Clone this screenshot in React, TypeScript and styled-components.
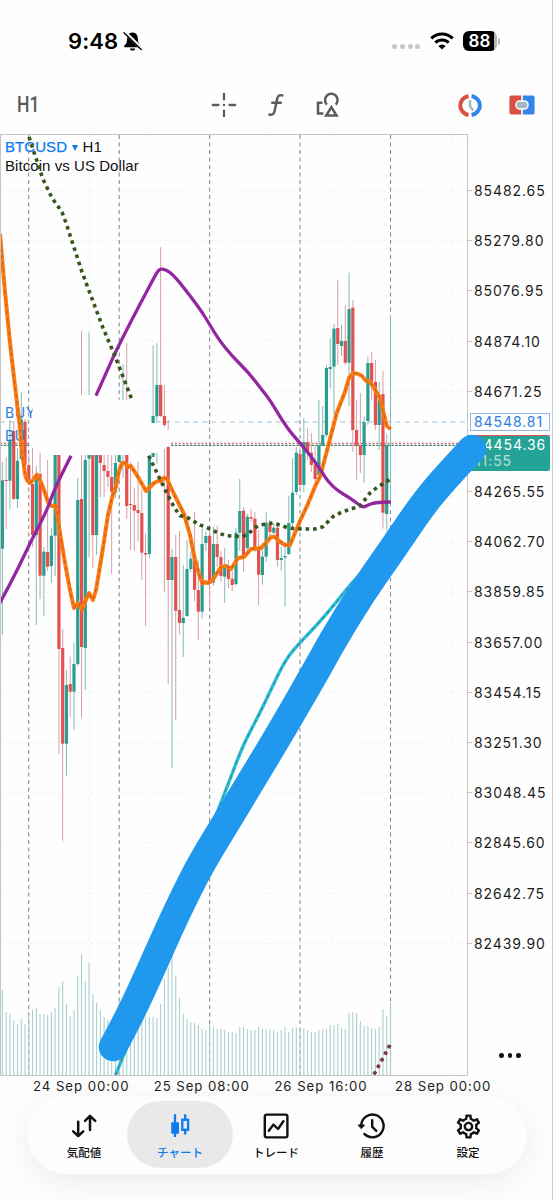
import React from 'react';
import styled, { createGlobalStyle } from 'styled-components';
import { MdOutlineSettings } from 'react-icons/md';

const GlobalStyle = createGlobalStyle`
  * { box-sizing: border-box; }
  body { margin: 0; background: #fefefe; }
`;

const Screen = styled.div`
  width: 553px;
  height: 1200px;
  overflow: hidden;
  display: flex;
  flex-direction: column;
  background: #fefefe;
  border-right: 1px solid #c9c9c9;
  font-family: Inter, 'Noto Sans CJK JP', sans-serif;
  color: #000;
`;

const StatusBar = styled.header`
  height: 82px;
  flex: none;
  display: flex;
  align-items: center;
  justify-content: space-between;
  padding: 0 52px 0 68px;
`;

const StatusGroup = styled.div<{ $gap: number }>`
  display: flex;
  align-items: center;
  gap: ${(p) => p.$gap}px;
`;

const Clock = styled.span`
  font-size: 22px;
  line-height: 26px;
  font-weight: 600;
  letter-spacing: 0.1px;
`;

const SignalDots = styled.div`
  display: flex;
  gap: 2.7px;
  margin-top: 11px;
`;

const SignalDot = styled.i`
  width: 5px;
  height: 5px;
  border-radius: 50%;
  background: #c7c7c9;
`;

const Battery = styled.div`
  width: 34px;
  height: 20px;
  border-radius: 6px;
  background: linear-gradient(90deg, #000 31px, #b5b5b5 31px);
  color: #fff;
  font-size: 17px;
  line-height: 20px;
  font-weight: 600;
  padding-left: 5.5px;
  letter-spacing: 0.2px;
`;

const BatteryTip = styled.i`
  width: 2px;
  height: 7px;
  border-radius: 0 3px 3px 0;
  background: #b5b5b5;
`;

const Toolbar = styled.div`
  height: 52px;
  flex: none;
  display: grid;
  grid-template-columns: 210px 1fr auto;
  align-items: center;
  padding: 0 17.5px 6px 17px;
`;

const Timeframe = styled.span`
  font-family: Roboto, sans-serif;
  font-weight: 500;
  font-size: 22px;
  line-height: 24px;
  color: #5a5a5a;
  transform: scaleX(0.8);
  transform-origin: left center;
`;

const ToolGroup = styled.div<{ $gap: number; $shift?: number }>`
  display: flex;
  align-items: center;
  gap: ${(p) => p.$gap}px;
  margin-left: ${(p) => p.$shift ?? 0}px;
`;

const ChartArea = styled.main`
  position: relative;
  height: 942px;
  flex: none;
  display: flex;
`;

const Plot = styled.section`
  position: relative;
  width: 468px;
  height: 942px;
`;

const PlotSvg = styled.svg`
  position: relative;
  display: block;
`;

const Legend = styled.div`
  position: absolute;
  left: 5px;
  top: 4px;
  font-family: 'Liberation Sans', sans-serif;
  font-size: 15px;
  line-height: 18.6px;
  letter-spacing: 0.06px;
  color: #111;
`;

const SymbolName = styled.span`
  color: #0a7cf0;
  -webkit-text-stroke: 0.25px #0a7cf0;
`;

const Caret = styled.span`
  display: inline-block;
  margin: 0 5px 1.5px 4.5px;
  border: 3.5px solid transparent;
  border-top: 6px solid #0a7cf0;
  border-bottom: 0;
`;

const PriceAxis = styled.aside`
  position: relative;
  flex: 1;
  padding-top: 31.4px;
`;

const PriceRow = styled.div`
  height: 50.2px;
  display: flex;
  align-items: center;
  font-size: 14px;
  letter-spacing: 0.92px;
  color: #1c1c1c;

  &::before {
    content: '';
    width: 4px;
    height: 1px;
    margin-right: 2px;
    background: #c4c4c4;
  }
`;

const EmptyRow = styled.div`
  height: 50.2px;
`;

const AskTag = styled.div`
  position: absolute;
  left: 1.5px;
  top: 279px;
  width: 80px;
  height: 18px;
  border: 1px solid #93b7ea;
  background: #fefefe;
  color: #2a7de1;
  font-size: 14px;
  line-height: 16px;
  letter-spacing: 0.92px;
  padding-left: 3.5px;
`;

const BidTag = styled.div`
  position: absolute;
  left: 0;
  top: 301px;
  width: 82px;
  height: 36px;
  border-top: 1.5px solid #e2504f;
  border-radius: 0 2px 2px 0;
  background: #26a397;
  color: #fff;
  font-size: 14px;
  line-height: 17px;
  letter-spacing: 0.92px;
  padding: 0 0 0 6px;
`;

const Countdown = styled.div`
  color: #b5e0db;
  padding-left: 1px;
  line-height: 16px;
`;

const MoreDots = styled.div`
  position: absolute;
  left: 31px;
  top: 919px;
  display: flex;
  gap: 4px;
`;

const MoreDot = styled.i`
  width: 4.6px;
  height: 4.6px;
  border-radius: 50%;
  background: #111;
`;

const BrushLayer = styled.svg`
  position: absolute;
  left: 0;
  top: 0;
  pointer-events: none;
`;

const TimeAxis = styled.div`
  height: 20px;
  flex: none;
  display: flex;
  padding-left: 33px;
`;

const TimeLabel = styled.span`
  width: 120.7px;
  flex: none;
  font-size: 13.2px;
  line-height: 21px;
  letter-spacing: 0.95px;
  color: #222;
  white-space: nowrap;
`;

const TabBar = styled.nav`
  width: 500px;
  height: 78px;
  flex: none;
  margin-left: 27px;
  border-radius: 39px;
  background: #fdfdfd;
  box-shadow: 0 8px 34px rgba(0, 0, 0, 0.08);
  display: flex;
  align-items: center;
  padding-left: 4px;
`;

const Tab = styled.div<{ $active?: boolean }>`
  width: 106px;
  height: 67px;
  margin: -1px -5px 0;
  flex: none;
  border-radius: 33.5px;
  background: ${(p) => (p.$active ? '#e9e9ea' : 'transparent')};
  color: ${(p) => (p.$active ? '#0a7cf0' : '#111')};
  display: flex;
  flex-direction: column;
  align-items: center;
  padding-top: 11px;

  &:first-child { margin-left: 0; }
`;

const TabLabel = styled.span`
  font-family: 'Noto Sans CJK JP', sans-serif;
  font-weight: 500;
  font-size: 11.5px;
  line-height: 16px;
  margin-top: 4px;
`;

const SettingsIcon = styled(MdOutlineSettings)`
  width: 29px;
  height: 29px;
  margin-bottom: -1px;
`;

const STEP = 3.768;
const xAt = (i: number) => 2.4 + STEP * i;
const BASE = 1075;

const UP = '#2a9d8f';
const DOWN = '#e2504f';

/* [bar index, rising, high, low, body top, body bottom] */
type Candle = [number, 0 | 1, number, number, number, number];
const candles: Candle[] = [
  [0, 1, 462, 635, 480.3, 548.7], [1, 0, 457, 529, 480, 481], [2, 1, 420, 509, 441, 480.7],
  [3, 0, 422, 500, 431, 499], [4, 1, 448, 508, 460.7, 499], [5, 1, 392, 460, 419.3, 459],
  [6, 0, 419, 475, 421.7, 465], [7, 0, 455, 481, 465, 480], [8, 0, 448, 547, 484, 535],
  [9, 1, 466, 625, 475, 535], [10, 0, 453, 599, 474, 575.7], [11, 1, 547, 616, 551.7, 575.7],
  [12, 0, 460, 571, 552, 566.7], [13, 1, 528, 583, 535.7, 566], [14, 1, 455, 576, 455, 535.7],
  [15, 0, 455, 754, 455, 649], [16, 0, 629, 841, 648, 743.7], [17, 1, 670, 775.7, 685, 743.7],
  [18, 0, 656.7, 717, 684, 691.7], [19, 1, 642.7, 729.7, 664, 691.7], [20, 1, 478, 666, 500, 664],
  [21, 0, 455, 718, 499, 647], [22, 1, 455, 690, 460, 648], [23, 1, 455, 557, 455, 458.7],
  [24, 0, 455, 568, 455, 535], [25, 1, 455, 555, 455, 535], [26, 0, 455, 497, 455, 463],
  [27, 0, 455, 497, 465, 471], [28, 0, 455, 487, 471, 477], [29, 0, 455, 574, 477, 491.7],
  [30, 1, 455, 498, 463, 492.7], [31, 1, 455, 463, 455, 462], [32, 1, 455, 478, 462, 463],
  [33, 0, 455, 519, 455, 506], [34, 0, 462, 550, 504, 505], [35, 0, 488, 551, 505, 510.7],
  [36, 0, 462, 541, 510, 513], [37, 0, 490, 580, 513, 552.7], [38, 0, 533, 626, 553, 554.5],
  [39, 1, 455, 558, 458, 554], [40, 1, 345, 423, 416, 423], [40, 1, 453, 457, 453, 457],
  [41, 1, 343, 422, 385, 416.3], [42, 0, 247, 417, 385, 416], [43, 0, 385, 427, 416, 425],
  [44, 0, 446, 684, 447, 580], [45, 1, 548.7, 767.7, 557, 580], [46, 0, 535, 720, 557, 610.7],
  [47, 0, 531, 634, 610, 623], [48, 1, 564.7, 657, 617.7, 623], [49, 1, 540, 617, 569, 616],
  [50, 1, 551.7, 572, 558.7, 569], [51, 0, 511.7, 601, 556, 589.7], [52, 0, 560, 640, 590, 611.7],
  [53, 1, 528, 619, 544, 611.7], [54, 1, 531.7, 551, 536, 543], [55, 0, 530, 608, 535.7, 584],
  [56, 1, 527, 586, 544, 582.7], [57, 0, 525.7, 567, 544, 557], [58, 0, 551, 582, 557, 576],
  [59, 1, 547.7, 603, 566.7, 576.7], [60, 0, 560, 588, 567, 579], [61, 0, 570.7, 591, 578.7, 585],
  [62, 1, 528, 586, 532.7, 584], [63, 1, 479, 551, 511, 532.7], [64, 0, 507, 572, 510.7, 556.7],
  [65, 1, 513.7, 552, 516.7, 548], [66, 0, 509, 521.7, 517, 518.7], [67, 0, 511.7, 552, 518.7, 549],
  [68, 0, 530, 605, 549, 574.7], [69, 1, 543, 584.7, 556.7, 575], [70, 1, 512, 561.7, 522.7, 556.7],
  [71, 0, 520, 540, 524, 532], [72, 1, 523, 535, 527.7, 532.7], [73, 0, 522, 566.7, 527.7, 560],
  [74, 1, 546.7, 571, 558, 560], [75, 1, 543, 606.7, 556, 557.5], [76, 1, 495.7, 555, 523, 554],
  [77, 1, 458, 527, 492.7, 523], [78, 1, 447, 495, 452.7, 492], [79, 0, 447, 490, 454, 485],
  [80, 1, 418, 492, 442, 485], [81, 0, 427.7, 460, 442, 452.7], [82, 0, 433, 472, 452.7, 465],
  [83, 0, 445, 482, 464.7, 479], [84, 1, 400, 478, 445.7, 475], [85, 1, 406, 446, 435, 445.7],
  [86, 1, 365, 437, 368, 435], [87, 1, 338, 388.7, 367, 369], [88, 1, 324, 415, 328.7, 366.7],
  [89, 0, 280, 365, 328, 344], [90, 1, 325, 356, 341, 346], [91, 0, 305, 365, 341, 362.7],
  [92, 1, 272.7, 406, 309, 362.7], [93, 0, 300, 452, 307.7, 430], [94, 0, 400, 480, 430, 445.7],
  [95, 0, 393, 473, 445.7, 455], [96, 1, 417, 483, 422, 455], [97, 1, 356.7, 425, 363, 421],
  [98, 0, 352, 400, 363, 381.7], [99, 0, 360, 430, 381.7, 425], [100, 1, 382, 450, 395, 425],
  [101, 0, 371, 528.7, 394, 512.7], [102, 1, 434, 530.7, 445, 514],
];

/* wicks whose bodies are hidden: [bar index, rising, top, bottom] */
const looseWicks: [number, 0 | 1, number, number][] = [
  [21, 0, 331, 395], [23, 1, 332.7, 395], [32, 1, 364, 400], [33, 0, 343, 400],
  [41, 1, 453, 464], [43, 0, 449, 591.7], [44, 0, 420, 430], [103, 1, 315, 507],
];

const volumeTops = [
  990, 1012, 1014, 1020, 1024, 1019, 1024, 1015, 1010, 1008, 1014, 1014, 1015, 1012, 1008, 987, 981, 1004,
  1016, 1010, 976, 954, 981, 963, 994, 1003, 1010, 1017, 1020, 1020, 1020, 1001, 1020, 1020, 1020, 1020,
  1020, 1018, 1017, 1017, 1017, 1018, 1004, 979, 968, 952, 976, 998, 1014, 1019, 1022, 1023, 1025, 1029,
  1030, 1024, 1027, 1029, 1029, 1030, 1032, 1032, 1033, 1027, 1027, 1029, 1030, 1030, 1027, 1029, 1029, 1030,
  1030, 1032, 1030, 1027, 1032, 1028, 1027, 1030, 1028, 1030, 1032, 1032, 1030, 1030, 1029, 1025, 1025, 1024,
  1028, 1029, 1013, 1012, 1013, 1021, 1026, 1026, 1028, 1029, 1027, 1009, 1016, 1003,
];

/* Rounds the corners of a polyline by running quadratic curves through segment midpoints. */
const smooth = (points: string) => {
  const p = points.split(' ').map((s) => s.split(',').map(Number));
  let d = `M${p[0][0]} ${p[0][1]}`;
  for (let i = 1; i < p.length - 1; i++) {
    d += ` Q${p[i][0]} ${p[i][1]} ${(p[i][0] + p[i + 1][0]) / 2} ${(p[i][1] + p[i + 1][1]) / 2}`;
  }
  const last = p[p.length - 1];
  return `${d} L${last[0]} ${last[1]}`;
};

const fastAverage =
  '0,234 5,292 10,343 15,386 20,428 22,452 25,474 27,480 29.5,483 33,480 37,474.5 40,480 44,490 48,502 52,506 56,506 60,533 65,563 70,590 74,608 78,603 82,610 85,602 89,593 93,600 96,590 102,554 108,515 113,494 116,487 119,471 122,463 125,463 128,467 131,466 138,477 146,491 154,483 158,481 161,481 164,477.5 167,479 174,494 184,514 190,535 195,560 199,574 202.5,583.5 205,582 208,583 212,581 221,567 226,566 231,569 238,558 244,557 251,549 261,548 266,543 271,537 275,537 279,541 285,545 290,545 295,533 300,521 306.7,506.7 315,486.7 320,476.7 328,446.7 336.7,413 345,391.7 349,378 352.7,373.5 357,373.5 361.7,375.7 366,380.7 370,381.7 374,388 380,398 386.7,426 390.7,429';
const midAverageA = '0,602.7 15,575 30,543 46.7,511 53,493 60,478 71,455.7';
const midAverageB =
  '96,395.7 106.7,371.7 115,353 131.7,320 146.7,291.7 157.3,271.5 160,269.3 163,269 168,271 173,275 180,282.7 200,309 210,325 219,340 232,356 249,373 262,390 270,400 286.7,427.7 300,443 310,455 320,469 328,481.7 338,491 350,498 358,504 363,507.5 368,505 375,502.5 390.7,502';
const slowAverageA = '29,137 42.5,178 52,198 62,212 65.7,222 82,272 103,328 115,356 132,400';
const slowAverageB =
  '148.7,455.7 166.7,493 173,505 176.7,511 180,515.7 186,516.7 200,525 205,526.7 220,533.7 226.7,535.7 241.7,536.7 248,534 255,527.7 260,525 273,523 280,525 288,528 301.7,529 315,529 323,526.7 333,516.7 341.7,512 348,510 360,506 370,493 378,486.7 390.7,479';
const trendLine = '115.5,1075 126,1050 223,797 226.7,788 243,745 258,716.7 270,691.7 285.7,659 300,642.7 320,621.7 336.7,601.7 351.7,583 366,568';
const brushPoints =
  '113,1047 127,1021 145,983 168.5,930 186,893 202,862 227.5,820 250,783 283.7,727 317,669 333,640 361,594 392,550 419,510 438,486 472,449';

const prices = [
  '85482.65', '85279.80', '85076.95', '84874.10', '84671.25', '', '84265.55', '84062.70', '83859.85',
  '83657.00', '83454.15', '83251.30', '83048.45', '82845.60', '82642.75', '82439.90',
];
const times = ['24 Sep 00:00', '25 Sep 08:00', '26 Sep 16:00', '28 Sep 00:00'];

const rowsY = Array.from({ length: 17 }, (_, i) => 140.3 + 50.2 * i);
const colsX = [88.9, 149.3, 269.9, 330.2, 450.8];
const daysX = [28.7, 119.2, 209.6, 300, 390.5];

function PriceChart() {
  return (
    <PlotSvg width="468" height="942" viewBox="0 134 468 942">
      <defs>
        <clipPath id="orderA"><rect x="0" y="400" width="32.5" height="24" /></clipPath>
        <clipPath id="orderB"><rect x="0" y="424" width="25" height="24" /></clipPath>
      </defs>
      <g stroke="#f0f3f5" strokeWidth="1" strokeDasharray="4 3.5">
        {rowsY.map((y) => <line key={y} x1="0" x2="467" y1={y} y2={y} />)}
        {colsX.map((x) => <line key={x} x1={x} x2={x} y1="135" y2={BASE} />)}
      </g>
      <g stroke="#8b8b8b" strokeWidth="1.1" strokeDasharray="4 3.5">
        {daysX.map((x) => <line key={x} x1={x} x2={x} y1="135" y2={BASE} />)}
      </g>
      <line x1="0" x2="467" y1="422" y2="422" stroke="#9dbfdc" strokeDasharray="4.8 4.4" strokeWidth="1.2" />
      <line x1="0" x2="467" y1="443.3" y2="443.3" stroke="#d9646a" strokeDasharray="2 1.8" strokeWidth="1.3" />
      <line x1="0" x2="467" y1="445.3" y2="445.3" stroke="#3f7f78" strokeDasharray="2.6 1.2" strokeWidth="1.3" />
      <path d="M29.5 404 L60 398 L97 397 L135 401.5 L150 404 L152 424 L166 426 L169.8 430 L169.8 447 L165 454.6 L33 454.6 L29.5 447Z" fill="#fefefe" />
      <g stroke="#a9cfce" strokeWidth="1.1">
        {volumeTops.map((top, i) => <line key={i} x1={xAt(i)} x2={xAt(i)} y1={top} y2={BASE} />)}
      </g>
      {looseWicks.map(([i, up, a, b], k) => (
        <line key={k} x1={xAt(i)} x2={xAt(i)} y1={a} y2={b} stroke={up ? '#86b9b8' : '#d2a3ab'} />
      ))}
      {candles.map(([i, up, hi, lo, top, bottom], k) => (
        <g key={k}>
          <line x1={xAt(i)} x2={xAt(i)} y1={hi} y2={lo} stroke={up ? '#86b9b8' : '#d6a0a6'} />
          <rect x={xAt(i) - 1.6} y={top} width="3.2" height={bottom - top} fill={up ? UP : DOWN} />
        </g>
      ))}
      <g fill="#2a7de1" fontFamily="Inter, sans-serif" fontSize="14" letterSpacing="0.6">
        <text x="5" y="418" clipPath="url(#orderA)">BUY</text>
        <text x="5" y="441" clipPath="url(#orderB)">BUY</text>
      </g>
      <g fill="none" strokeLinejoin="round">
        <path d={smooth(trendLine)} stroke="#27c0da" strokeWidth="3.4" />
        <path d={smooth(trendLine)} stroke="#567e88" strokeWidth="1.1" strokeDasharray="4 3.4" />
        <polyline points={fastAverage} stroke="#fb7a12" strokeWidth="4" />
        <polyline points={fastAverage} stroke="#c9600f" strokeWidth="1.1" strokeDasharray="3.5 3.5" />
        <path d={smooth(midAverageA)} stroke="#9327a0" strokeWidth="3.3" />
        <path d={smooth(midAverageB)} stroke="#9327a0" strokeWidth="3.3" />
        <polyline points={slowAverageA} stroke="#35561c" strokeWidth="3.6" strokeDasharray="3.6 3.9" />
        <polyline points={slowAverageB} stroke="#35561c" strokeWidth="3.6" strokeDasharray="3.6 3.9" />
        <polyline points="374,1074.5 390,1045" stroke="#7c3440" strokeWidth="3.6" strokeDasharray="3.6 3.9" />
      </g>
      <path d="M0.5 1075.5 V134.5 H467.5 V1075.5 Z" stroke="#c4c4c4" fill="none" />
    </PlotSvg>
  );
}

const MutedBell = () => (
  <svg width="20" height="21" viewBox="0 0 20 21">
    <path d="M9.5 1.6 C5.6 1.8 4.1 4.6 4.1 8 C4.1 12 2.8 12.8 1.3 14.7 C0.9 15.5 1.2 16.2 2 16.2 H17 C17.8 16.2 18.1 15.5 17.7 14.7 C16.2 12.8 14.9 12 14.9 8 C14.9 4.6 13.4 1.8 9.5 1.6Z" fill="#000" />
    <path d="M6.8 17.4 H12.2 C11.8 19 10.8 19.6 9.5 19.6 C8.2 19.6 7.2 19 6.8 17.4Z" fill="#000" />
    <path d="M2 1.6 L19.5 18.3" stroke="#fefefe" strokeWidth="3.4" />
    <path d="M1 1.8 L18.2 18.6" stroke="#000" strokeWidth="1.4" strokeLinecap="round" />
  </svg>
);

const Wifi = () => (
  <svg width="24" height="18" viewBox="0 0 24 18" fill="none" stroke="#000" strokeWidth="3">
    <path d="M1.3 6.4 A15.2 15.2 0 0 1 22.7 6.4" />
    <path d="M5.3 10.6 A9.6 9.6 0 0 1 18.7 10.6" />
    <path d="M12 17.6 L8.3 13.9 A5.3 5.3 0 0 1 15.7 13.9 Z" fill="#000" stroke="none" />
  </svg>
);

const Crosshair = () => (
  <svg width="26" height="26" viewBox="0 0 26 26" stroke="#5c5c5c" strokeWidth="2.3" strokeLinecap="round">
    <path d="M13 1.8 V7.4 M13 18.6 V24.2 M1.8 13 H7.4 M18.6 13 H24.2" />
    <circle cx="13" cy="13" r="1.2" fill="#5c5c5c" stroke="none" />
  </svg>
);

const FunctionIcon = () => (
  <svg width="16" height="24" viewBox="0 0 16 24" fill="none" stroke="#5c5c5c" strokeWidth="2.5" strokeLinecap="round">
    <path d="M14.4 2.4 C11.4 1.6 10 2.6 9.3 5.4 L6.5 18.2 C5.8 21.2 4.2 22.3 1.4 21.6" />
    <path d="M4.2 9.8 H12.8" />
  </svg>
);

const ShapesIcon = () => (
  <svg width="24" height="26" viewBox="0 0 24 26" fill="none" stroke="#5c5c5c" strokeWidth="2.5">
    <path d="M10.9 12.6 A6.3 6.3 0 1 1 19.7 12.6" />
    <path d="M6.4 10.8 H2 V21.4 H7.4" />
    <path d="M15.4 15.2 L20.6 23.6 H10.2 Z" />
  </svg>
);

const SessionIcon = () => (
  <svg width="26" height="23" viewBox="0 0 26 23" fill="none">
    <path d="M11.5 2 A10.4 9.7 0 0 0 11.5 21" stroke="#d94f43" strokeWidth="4" />
    <path d="M14.6 2 A10.4 9.7 0 0 1 14.6 21" stroke="#3486ea" strokeWidth="4" />
    <path d="M13 6 V12.2 L16.2 16.4" stroke="#a3b8c2" strokeWidth="2.5" />
  </svg>
);

const TradeTilesIcon = () => (
  <svg width="26" height="20" viewBox="0 0 26 20">
    <path d="M2.4 0.5 H12.2 V19.5 H2.4 A2 2 0 0 1 0.4 17.5 V2.5 A2 2 0 0 1 2.4 0.5Z" fill="#d94f43" />
    <path d="M13.8 0.5 H23.6 A2 2 0 0 1 25.6 2.5 V17.5 A2 2 0 0 1 23.6 19.5 H13.8Z" fill="#3486ea" />
    <rect x="6.2" y="5.2" width="13.6" height="9.6" rx="4.8" fill="#fefefe" />
    <rect x="7.6" y="6.8" width="10.8" height="6.4" rx="3.2" fill="#a3b8c2" />
  </svg>
);

const QuotesIcon = () => (
  <svg width="28" height="28" viewBox="0 0 28 28" fill="none" stroke="#111" strokeWidth="2.5" strokeLinecap="round" strokeLinejoin="round">
    <path d="M8.2 9.8 V24 M3.2 19.3 L8.2 24.2 L13.2 19.3" />
    <path d="M20 18 V4 M15 8.8 L20 3.8 L25.2 8.8" />
  </svg>
);

const CandlesIcon = () => (
  <svg width="28" height="28" viewBox="0 0 28 28" fill="none" stroke="#0a7cf0" strokeWidth="2.3">
    <path d="M9 2.2 V25 M19.2 2.2 V7.5 M19.2 18.3 V22.5" />
    <rect x="5.2" y="10.3" width="7.8" height="11.4" rx="1" fill="#0a7cf0" stroke="none" />
    <rect x="16.3" y="7.8" width="5.8" height="10" />
  </svg>
);

const TradeIcon = () => (
  <svg width="28" height="28" viewBox="0 0 28 28" fill="none" stroke="#111" strokeWidth="2.4" strokeLinejoin="round" strokeLinecap="round">
    <rect x="2.8" y="2.6" width="22.6" height="22.8" rx="1.8" />
    <path d="M6.8 18.8 L11.4 12.6 L16 17 L21.4 9.2" />
  </svg>
);

const HistoryIcon = () => (
  <svg width="28" height="28" viewBox="0 0 28 28" fill="none" stroke="#111" strokeWidth="2.4" strokeLinecap="round">
    <path d="M3.2 14 A11.2 11.4 0 1 1 6.4 21.9" />
    <path d="M0.4 13 H6.5 L3.4 16.4Z" fill="#111" stroke="#111" strokeWidth="1" strokeLinejoin="round" />
    <path d="M14.2 8.2 V14.8 L18.3 18.9" />
  </svg>
);

export default function App() {
  return (
    <Screen>
      <GlobalStyle />
      <StatusBar>
        <StatusGroup $gap={4.5}>
          <Clock>9:48</Clock>
          <MutedBell />
        </StatusGroup>
        <StatusGroup $gap={9.3}>
          <SignalDots>
            <SignalDot /><SignalDot /><SignalDot /><SignalDot />
          </SignalDots>
          <Wifi />
          <StatusGroup $gap={1}>
            <Battery>88</Battery>
            <BatteryTip />
          </StatusGroup>
        </StatusGroup>
      </StatusBar>
      <Toolbar>
        <Timeframe>H1</Timeframe>
        <ToolGroup $gap={31.5} $shift={-16.3}>
          <Crosshair />
          <FunctionIcon />
          <ShapesIcon />
        </ToolGroup>
        <ToolGroup $gap={25.5}>
          <SessionIcon />
          <TradeTilesIcon />
        </ToolGroup>
      </Toolbar>
      <ChartArea>
        <Plot>
          <Legend>
            <div><SymbolName>BTCUSD</SymbolName><Caret />H1</div>
            <div>Bitcoin vs US Dollar</div>
          </Legend>
          <PriceChart />
        </Plot>
        <PriceAxis>
          {prices.map((p, i) => (p ? <PriceRow key={i}>{p}</PriceRow> : <EmptyRow key={i} />))}
          <AskTag>84548.81</AskTag>
          <BidTag>
            84454.36
            <Countdown>11:55</Countdown>
          </BidTag>
          <MoreDots><MoreDot /><MoreDot /><MoreDot /></MoreDots>
        </PriceAxis>
        <BrushLayer width="552" height="942" viewBox="0 134 552 942">
          <path d={smooth(brushPoints)} fill="none" stroke="#1f98ee" strokeWidth="28.5" strokeLinecap="round" strokeLinejoin="round" />
        </BrushLayer>
      </ChartArea>
      <TimeAxis>
        {times.map((t) => <TimeLabel key={t}>{t}</TimeLabel>)}
      </TimeAxis>
      <TabBar>
        <Tab><QuotesIcon /><TabLabel>気配値</TabLabel></Tab>
        <Tab $active><CandlesIcon /><TabLabel>チャート</TabLabel></Tab>
        <Tab><TradeIcon /><TabLabel>トレード</TabLabel></Tab>
        <Tab><HistoryIcon /><TabLabel>履歴</TabLabel></Tab>
        <Tab><SettingsIcon /><TabLabel>設定</TabLabel></Tab>
      </TabBar>
    </Screen>
  );
}
